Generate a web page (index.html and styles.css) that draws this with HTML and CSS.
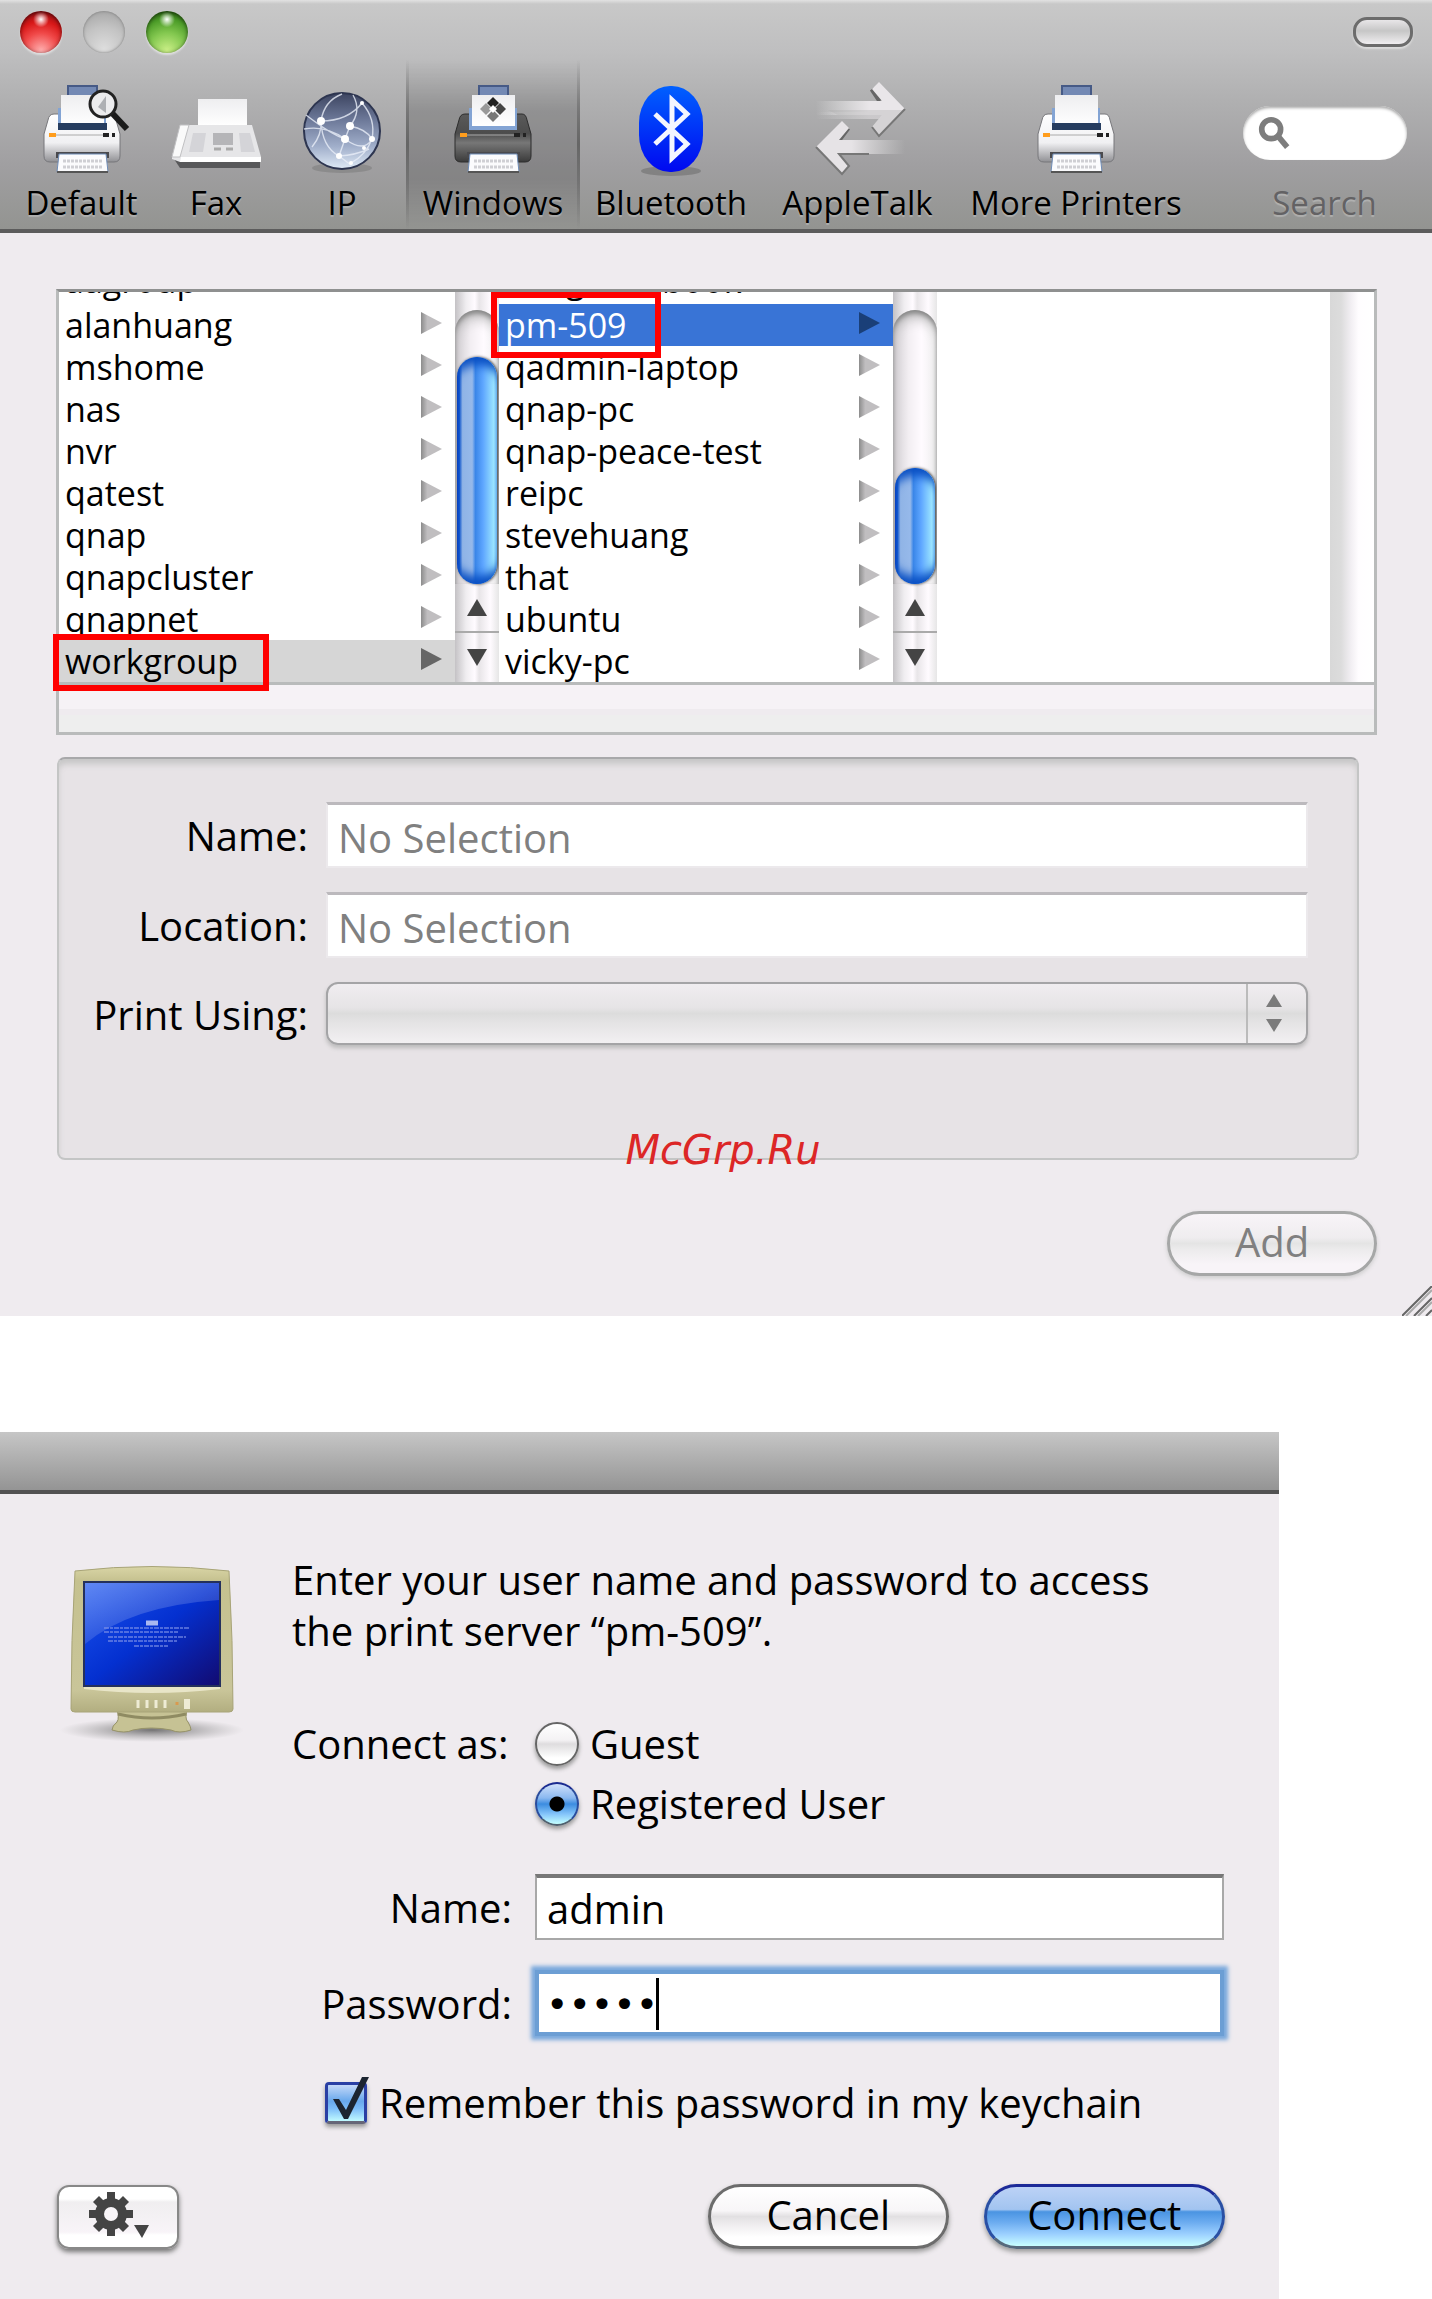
FILE: index.html
```html
<!DOCTYPE html>
<html lang="en">
<head>
  <meta charset="UTF-8">
  <meta name="viewport" content="width=device-width, initial-scale=1.0">
  <title>Add Printer</title>
  <link rel="stylesheet" href="styles.css">
</head>
<body>
  <!-- shared shapes -->
  <svg class="defs" width="0" height="0" aria-hidden="true">
    <defs>
      <linearGradient id="white-body" x1="0" y1="0" x2="0" y2="1">
        <stop offset="0" stop-color="#fff"/><stop offset=".6" stop-color="#f0f0f2"/><stop offset="1" stop-color="#909094"/>
      </linearGradient>
      <linearGradient id="dark-body" x1="0" y1="0" x2="0" y2="1">
        <stop offset="0" stop-color="#5a5a5a"/><stop offset=".4" stop-color="#4c4c4c"/><stop offset=".6" stop-color="#777"/><stop offset="1" stop-color="#3a3a3a"/>
      </linearGradient>
      <linearGradient id="paper" x1="0" y1="0" x2="0" y2="1">
        <stop offset="0" stop-color="#eeeef0"/><stop offset="1" stop-color="#fff"/>
      </linearGradient>
      <linearGradient id="globe" x1="0" y1="0" x2="0" y2="1">
        <stop offset="0" stop-color="#3c4460"/><stop offset=".35" stop-color="#6c7898"/><stop offset=".7" stop-color="#a0aeca"/><stop offset="1" stop-color="#dfeaf6"/>
      </linearGradient>
      <linearGradient id="bt" x1="0" y1="0" x2="0" y2="1">
        <stop offset="0" stop-color="#0060ff"/><stop offset="1" stop-color="#0008f0"/>
      </linearGradient>
      <linearGradient id="fade-right" gradientUnits="userSpaceOnUse" x1="8" y1="0" x2="97" y2="0"><stop offset="0" stop-color="#eee" stop-opacity="0"/><stop offset=".6" stop-color="#e9e6e9"/></linearGradient>
      <linearGradient id="fade-left" gradientUnits="userSpaceOnUse" x1="8" y1="0" x2="97" y2="0"><stop offset=".4" stop-color="#e6e3e6"/><stop offset="1" stop-color="#ddd" stop-opacity="0"/></linearGradient>
      <linearGradient id="case" x1="0" y1="0" x2="0" y2="1">
        <stop offset="0" stop-color="#d9d5a6"/><stop offset=".1" stop-color="#c5c18f"/><stop offset=".85" stop-color="#c9c599"/><stop offset="1" stop-color="#b2ae80"/>
      </linearGradient>
      <linearGradient id="screen" x1="0" y1="0" x2="1" y2="1">
        <stop offset="0" stop-color="#1b55f0"/><stop offset=".5" stop-color="#0430d0"/><stop offset="1" stop-color="#120a70"/>
      </linearGradient>
      <linearGradient id="gloss" x1="0" y1="0" x2=".6" y2="1">
        <stop offset="0" stop-color="#fff" stop-opacity=".3"/><stop offset="1" stop-color="#fff" stop-opacity=".06"/>
      </linearGradient>
      <radialGradient id="floor"><stop offset="0" stop-color="#555" stop-opacity=".8"/><stop offset="1" stop-color="#888" stop-opacity="0"/></radialGradient>
      <g id="paper-feed">
        <path d="M36 1h29v12H36z" fill="#7389b4" stroke="#465a86" stroke-width="2"/>
        <path d="M26 23h48v22H26z" fill="#83a4d4"/>
        <path d="M29 10h43v31H29z" fill="url(#paper)"/>
      </g>
      <g id="paper-out">
        <path d="M24 67h53v6H24z" fill="#4a4a4e"/>
        <path d="M27 69h47l2 18H25z" fill="#fbfbfd" stroke="#6f8db8" stroke-width="1"/>
        <path d="M25 87h51" stroke="#555" stroke-width="2"/>
        <path d="M31 76h40M31 82h40" stroke="#cfcfd4" stroke-width="3" stroke-dasharray="3 1"/>
      </g>
      <g id="lights">
        <path d="M24 50h50" stroke="#aaa" stroke-width="1"/>
        <path d="M17 48h7v4h-7z" fill="#ff9d1c"/>
        <path d="M71 48h6v4h-6zM80 48h3v4h-3z" fill="#222"/>
      </g>
      <g id="printer">
        <path d="M26 23h48v22H26z" fill="#83a4d4"/>
        <path d="M22 29h6v14h45V29h6q4 0 5 6l4 14v22q0 6-6 6H18q-6 0-6-6V49l4-14q1-6 6-6z" fill="url(#white-body)" stroke="#77777b" stroke-width="1"/>
        <use href="#paper-feed"/>
        <path d="M26 38h49v7H26z" fill="#263d60"/>
        <use href="#lights"/>
        <use href="#paper-out"/>
      </g>
    </defs>
  </svg>

  <section class="window browser-window">
    <header class="window-header">
      <div class="titlebar">
        <div class="lights">
          <button class="light red" aria-label="Close"></button>
          <button class="light gray" aria-label="Minimize"></button>
          <button class="light green" aria-label="Zoom"></button>
        </div>
        <button class="pill" aria-label="Toggle toolbar"></button>
      </div>
      <nav class="toolbar">
        <button class="tool">
          <svg class="icon" viewBox="0 0 100 90">
            <use href="#printer"/>
            <path d="M80 28l15 16" stroke="#1a1a1a" stroke-width="6"/>
            <circle cx="71" cy="19" r="13" fill="#ececee" stroke="#222" stroke-width="3"/>
            <path d="M66 22l8-11v17z" fill="#aeb0b4"/>
          </svg>
          <span>Default</span>
        </button>
        <button class="tool">
          <svg class="icon" viewBox="0 0 100 90">
            <path d="M8 74h86v9H14z" fill="#58585a"/>
            <path d="M32 14h49v27H32z" fill="url(#paper)"/>
            <path d="M19 40h67l9 32v5H14l-8-3v-4z" fill="#e6e6e8"/>
            <path d="M14 40h9L14 72H6z" fill="#fafafa" stroke="#c0c0c2" stroke-width="1"/>
            <path d="M15 72h80v5H14z" fill="#fff"/>
            <path d="M47 48h20v12H47z" fill="#b5b5b8"/>
            <path d="M27 48h13l-3 19H23zM73 48h11l5 19H75z" fill="#d4d4d8"/>
            <path d="M48 64h7M60 64h7" stroke="#aaa" stroke-width="3"/>
          </svg>
          <span>Fax</span>
        </button>
        <button class="tool">
          <svg class="icon" viewBox="0 0 100 90">
            <ellipse cx="50" cy="83" rx="30" ry="5" fill="#777" opacity=".5"/>
            <circle cx="50" cy="46" r="38" fill="url(#globe)" stroke="#2d3550" stroke-width="2"/>
            <g fill="none" stroke="#e8eef8" stroke-width="1.4" opacity=".8">
              <path d="M29 36Q32 16 50 9M29 36Q56 36 70 18M12 44Q34 40 53 54T80 54M29 36Q30 62 47 71M58 41Q70 26 61 10M58 41L53 54L47 71M58 41Q74 44 80 54Q74 70 59 78M14 30Q40 50 53 54M80 54Q84 34 70 18M47 71Q64 70 77 64M20 62Q30 50 29 36M47 71L59 80"/>
            </g>
            <g fill="#fff"><circle cx="29" cy="36" r="4"/><circle cx="58" cy="41" r="4"/><circle cx="53" cy="54" r="4"/><circle cx="80" cy="54" r="3"/><circle cx="47" cy="71" r="3"/><circle cx="70" cy="18" r="2"/><circle cx="72" cy="63" r="2"/><circle cx="59" cy="78" r="2"/></g>
          </svg>
          <span>IP</span>
        </button>
        <button class="tool selected">
          <svg class="icon" viewBox="0 0 100 90">
            <path d="M22 29h6v14h45V29h6q4 0 5 6l4 14v22q0 6-6 6H18q-6 0-6-6V49l4-14q1-6 6-6z" fill="url(#dark-body)" stroke="#2c2c2c" stroke-width="1"/>
            <use href="#paper-feed"/>
            <path d="M50 12l6 6-6 6-6-6z" fill="#222"/>
            <path d="M50 25l6 6-6 6-6-6z" fill="#777"/>
            <path d="M57 18l6 6-6 6-6-6z" fill="#444"/>
            <path d="M43 18l6 6-6 6-6-6z" fill="#999"/>
            <path d="M50 20l4 4-4 4-4-4z" fill="#fff"/>
            <use href="#lights"/>
            <use href="#paper-out"/>
          </svg>
          <span>Windows</span>
        </button>
        <button class="tool">
          <svg class="icon" viewBox="0 0 100 90">
            <ellipse cx="50" cy="86" rx="30" ry="5" fill="#666" opacity=".5"/>
            <rect x="18" y="1" width="64" height="86" rx="31" ry="37" fill="url(#bt)"/>
            <path d="M34 29l32 30-15 14V15l15 14-32 30" fill="none" stroke="#f4f6ff" stroke-width="5"/>
          </svg>
          <span>Bluetooth</span>
        </button>
        <button class="tool">
          <svg class="icon" viewBox="0 0 100 90">
            <path d="M8 27h66v7H8z" fill="url(#fade-right)" stroke="none" opacity=".5"/>
            <path d="M64 4l8 12" stroke="#666" stroke-width="5"/>
            <path d="M8 16h66L64 4l7-7 26 27-26 27-7-9 10-12H8z" fill="url(#fade-right)"/>
            <path d="M20 25h76L71 51l-7-9 10-12H30z" fill="#aaa" opacity=".3"/>
            <path d="M97 24L71 51l-7-9" fill="none" stroke="#777" stroke-width="2"/>
            <path d="M40 43l-9 12" stroke="#666" stroke-width="5"/>
            <path d="M97 55H31l10-12-7-7L8 62l26 27 7-8-10-12h66z" fill="url(#fade-left)"/>
            <path d="M8 62l26 27 7-8-10-12h30" fill="none" stroke="#777" stroke-width="2"/>
          </svg>
          <span>AppleTalk</span>
        </button>
        <button class="tool">
          <svg class="icon" viewBox="0 0 100 90"><use href="#printer"/></svg>
          <span>More Printers</span>
        </button>
        <div class="tool search">
          <div class="search-box">
            <svg viewBox="0 0 36 36"><circle cx="15" cy="14" r="10" fill="none" stroke="#7d7d7d" stroke-width="6"/><path d="M22 21l10 12" stroke="#7d7d7d" stroke-width="6"/></svg>
            <input type="search" id="search">
          </div>
          <label for="search">Search</label>
        </div>
      </nav>
    </header>

    <div class="window-body">
      <div class="browser">
        <div class="columns">
          <div class="column">
            <ul class="list">
              <li>aagroup</li>
              <li>alanhuang</li>
              <li>mshome</li>
              <li>nas</li>
              <li>nvr</li>
              <li>qatest</li>
              <li>qnap</li>
              <li>qnapcluster</li>
              <li>qnapnet</li>
              <li class="current">workgroup</li>
            </ul>
            <div class="scrollbar">
              <div class="groove"><div class="thumb long"></div></div>
              <button class="scroll-up" aria-label="Scroll up"></button>
              <button class="scroll-down" aria-label="Scroll down"></button>
            </div>
            <div class="mark mark-group"></div>
          </div>
          <div class="column">
            <ul class="list">
              <li>ming-macbook</li>
              <li class="active">pm-509</li>
              <li>qadmin-laptop</li>
              <li>qnap-pc</li>
              <li>qnap-peace-test</li>
              <li>reipc</li>
              <li>stevehuang</li>
              <li>that</li>
              <li>ubuntu</li>
              <li>vicky-pc</li>
            </ul>
            <div class="scrollbar">
              <div class="groove"><div class="thumb"></div></div>
              <button class="scroll-up" aria-label="Scroll up"></button>
              <button class="scroll-down" aria-label="Scroll down"></button>
            </div>
            <div class="mark mark-host"></div>
          </div>
          <div class="column">
            <ul class="list"></ul>
            <div class="scrollbar empty"></div>
          </div>
        </div>
        <div class="browser-foot"></div>
      </div>

      <form class="details">
        <label for="printer-name">Name:</label>
        <input type="text" id="printer-name" placeholder="No Selection">
        <label for="location">Location:</label>
        <input type="text" id="location" placeholder="No Selection">
        <label for="driver">Print Using:</label>
        <div class="select-box">
          <select id="driver"><option></option></select>
          <svg viewBox="0 0 16 38"><path d="M8 0l8 13H0zM8 38l8-13H0z" fill="#7b7b7b"/></svg>
        </div>
        <div class="watermark">McGrp.Ru</div>
      </form>

      <div class="actions">
        <button class="btn disabled">Add</button>
      </div>
      <svg class="grip" viewBox="0 0 30 30"><path d="M0 30L30 0M12 30L30 12M24 30l6-6" stroke="#666" stroke-width="2"/><path d="M4 30L30 4M16 30L30 16" stroke="#aaa" stroke-width="2"/></svg>
    </div>
  </section>

  <section class="window login-window">
    <header class="login-header"></header>
    <form class="login">
      <svg class="monitor" viewBox="0 0 184 180">
        <ellipse cx="92" cy="168" rx="92" ry="12" fill="url(#floor)"/>
        <path d="M56 145h72q-4 12 0 15 3 5 3 8-12 4-20 0-20-4-38 0-8 4-21 0 0-4 5-8 3-4-1-15z" fill="#c6c294" stroke="#969268" stroke-width="1"/>
        <path d="M58 152q34 8 68 0" fill="none" stroke="#8f8b62" stroke-width="3"/>
        <path d="M15 9Q92 0 169 9q4 70 4 138 0 3-4 3H15q-4 0-4-3Q11 79 15 9z" fill="url(#case)" stroke="#a8a478" stroke-width="1"/>
        <path d="M24 127q68 8 136 0v-2H24z" fill="#e8e5c8"/>
        <path d="M24 20h136v104H24z" fill="url(#screen)" stroke="#24305c" stroke-width="2"/>
        <path d="M25 21h134v17Q70 44 25 82z" fill="url(#gloss)"/>
        <path d="M86 61h12" stroke="#a9b8f0" stroke-width="5"/>
        <path d="M44 66h86M44 70h74M48 75h78M48 79h70M74 84h34" stroke="#8093e8" stroke-width="2" stroke-dasharray="5 1 3 1" opacity=".6"/>
        <path d="M78 138v8M87 138v8M96 138v8M105 138v8" stroke="#eeebd4" stroke-width="3"/>
        <path d="M127 137v10" stroke="#eeebd4" stroke-width="6"/>
        <path d="M117 140v3" stroke="#d89a50" stroke-width="3"/>
      </svg>
      <div class="login-main">
        <p>Enter your user name and password to access<br>the print server “pm-509”.</p>
        <div class="grid connect">
          <span id="as">Connect as:</span>
          <div role="radiogroup" aria-labelledby="as">
            <label class="radio"><input type="radio" name="as"> Guest</label>
            <label class="radio"><input type="radio" name="as" checked> Registered User</label>
          </div>
        </div>
        <div class="grid fields">
          <label for="user">Name:</label>
          <input type="text" id="user" value="admin">
          <label for="password">Password:</label>
          <div class="password-box">
            <input type="password" id="password" value="admin">
            <span class="caret"></span>
          </div>
        </div>
        <label class="remember">
          <span class="check-box">
            <input type="checkbox" checked>
            <svg viewBox="0 0 48 50"><path d="M8 24h6l7 11L37 2h7L23 44h-4z" fill="#1c2430"/></svg>
          </span>
          Remember this password in my keychain
        </label>
      </div>
    </form>
    <footer class="login-footer">
      <button class="gear-btn" aria-label="Options">
        <svg viewBox="0 0 60 48">
          <g fill="#444">
            <circle cx="22" cy="23" r="16"/>
            <path d="M18 1h8v44h-8z"/>
            <path d="M0 19h44v8H0z"/>
            <path d="M4 11l6-6 30 30-6 6z"/>
            <path d="M34 5l6 6-30 30-6-6z"/>
            <path d="M45 34h15l-7 13z"/>
          </g>
          <circle cx="22" cy="23" r="7" fill="#f8f5f8"/>
        </svg>
      </button>
      <button class="btn">Cancel</button>
      <button class="btn primary">Connect</button>
    </footer>
  </section>
</body>
</html>
```
FILE: styles.css
```css
* {
  box-sizing: border-box;
}
body {
  margin: 0;
  background: #fff;
  color: #000;
  font-family: "Open Sans", "Noto Sans", sans-serif;
  font-size: 40px;
  font-weight: 500;
}
button, input, select {
  font: inherit;
  color: inherit;
  margin: 0;
}
button {
  border: none;
  background: none;
  padding: 0;
}
.defs {
  position: absolute;
}
.window {
  background: #efebef;
}

/* title bar and toolbar */
.window-header {
  background: linear-gradient(#e2e2e2 0, #c8c8c8 4px, #bfbfc0 50px, #b0b0b1 100px, #a09fa1 165px, #939491 100%);
  border-bottom: 4px solid #5c5c5c;
}
.titlebar {
  display: flex;
  justify-content: space-between;
  align-items: center;
  height: 60px;
  padding: 4px 19px 0 20px;
}
.lights {
  display: flex;
  gap: 21px;
}
.light {
  width: 42px;
  height: 42px;
  border-radius: 50%;
  box-shadow: inset 0 1px 4px rgba(0, 0, 0, 0.6), 0 2px 2px rgba(255, 255, 255, 0.5);
}
.red {
  background: radial-gradient(circle at 50% 20%, #fff 0, rgba(255, 255, 255, 0) 20%), radial-gradient(circle at 50% 95%, #ffb0b0 0, #f04848 40%, #d81818 65%, #7c0a10 100%);
}
.gray {
  background: radial-gradient(circle at 50% 90%, #ddd 0, #c4c4c4 50%, #a0a0a0 100%);
  box-shadow: inset 0 0 3px #777;
}
.green {
  background: radial-gradient(circle at 50% 20%, #fff 0, rgba(255, 255, 255, 0) 20%), radial-gradient(circle at 50% 95%, #ccf088 0, #84c850 40%, #4c9c28 70%, #1c5008 100%);
}
.pill {
  width: 60px;
  height: 30px;
  border: 3px solid #6c6c6c;
  border-radius: 14px;
  background: linear-gradient(#e8e6e8, #c6c6c6 45%, #f0eef0);
  box-shadow: 0 2px 2px #ddd;
}
.toolbar {
  display: grid;
  grid-template-columns: 145fr 124fr 128fr 174fr 182fr 191fr 246fr 233fr;
  padding-left: 9px;
  font-size: 33px;
  line-height: 44px;
}
.tool {
  display: flex;
  flex-direction: column;
  align-items: center;
  padding: 25px 0 4px;
  white-space: nowrap;
  text-shadow: 0 2px 1px rgba(255, 255, 255, 0.25);
}
.icon {
  width: 100px;
  height: 90px;
  margin-bottom: 6px;
  overflow: visible;
}
.tool.selected {
  background: linear-gradient(rgba(0, 0, 0, 0), rgba(0, 0, 0, 0.16) 30%, rgba(0, 0, 0, 0.16) 70%, rgba(0, 0, 0, 0));
  border: solid;
  border-width: 0 3px;
  border-image: linear-gradient(rgba(60, 60, 60, 0), #666 50%, rgba(60, 60, 60, 0)) 1;
}
.search {
  padding-left: 18px;
  color: #636264;
}
.search-box {
  display: flex;
  align-items: center;
  width: 164px;
  height: 54px;
  margin: 21px 0;
  padding: 0 14px;
  border-radius: 27px;
  background: #fff;
  box-shadow: inset 0 2px 3px #aaa;
}
.search-box svg {
  flex: none;
  width: 34px;
  height: 36px;
}
.search-box input {
  width: 100%;
  min-width: 0;
  border: none;
  outline: none;
  background: none;
}

/* network browser */
.window-body {
  position: relative;
  padding: 56px 55px 40px 56px;
}
.browser {
  border: 3px solid #b9bbbb;
  border-top-color: #8f9090;
}
.columns {
  display: grid;
  grid-template-columns: 440fr 438fr 437fr;
  height: 390px;
}
.column {
  display: flex;
  position: relative;
  min-width: 0;
  background: #fff;
}
.list {
  flex: 1;
  display: flex;
  flex-direction: column;
  justify-content: flex-end;
  min-width: 0;
  height: 390px;
  margin: 0;
  padding: 0;
  overflow: hidden;
  list-style: none;
  font-size: 34px;
  line-height: 42px;
}
.list li {
  display: flex;
  flex: none;
  justify-content: space-between;
  align-items: center;
  height: 42px;
  padding: 0 13px 0 6px;
}
.list li::after {
  content: "";
  width: 21px;
  height: 22px;
  margin-bottom: 4px;
  background: linear-gradient(90deg, #8c8c8c, #c0bec0 30%);
  clip-path: polygon(0 0, 100% 50%, 0 100%);
}
/* the row scrolled under the top edge */
.list li:first-child {
  line-height: 36px;
  align-items: flex-start;
}
.list li:first-child::after {
  content: none;
}
.list .current {
  background: #d6d6d6;
}
.list .current::after {
  background: #666;
}
.list .active {
  background: #3974d6;
  color: #fff;
}
.list .active::after {
  background: #1a3f78;
}
.scrollbar {
  display: flex;
  flex-direction: column;
  width: 44px;
  padding-top: 18px;
  background: linear-gradient(90deg, #c4c2c5, #efedf0 25%, #fffbff 45%, #e8e5e8 55%, #fffbff 80%, #e6e6e6);
}
.scrollbar.empty {
  background: linear-gradient(90deg, #d8d8d8 0, #dcdcdc 25%, #f2eff3 48%, #fffdff 65%, #fff);
}
.groove {
  display: flex;
  flex-direction: column;
  justify-content: flex-end;
  flex: 1;
  padding: 0 2px;
  border-radius: 22px 22px 0 0;
  background: linear-gradient(90deg, #cfccd0, #f2eef2 35%, #fffbff 65%, #eee);
  box-shadow: inset 0 3px 4px #888, inset 0 12px 14px -6px #aaa;
}
.thumb {
  height: 116px;
  border-radius: 20px;
  background: linear-gradient(90deg, #0a3fc0 0, #0f55cc 6%, #90b4e6 14%, #96b9ea 38%, #3a86e8 46%, #5ea6ff 65%, #9ae4ff 92%, #6cb4ee);
  box-shadow: inset 0 16px 10px -8px #0a50c4, inset 0 -16px 10px -8px #0a50c4, 1px 0 3px #333;
}
.thumb.long {
  height: 227px;
}
.scroll-up, .scroll-down {
  display: flex;
  justify-content: center;
  align-items: center;
  height: 49px;
}
.scroll-up {
  border-bottom: 2px solid #aaa;
}
.scroll-up::after, .scroll-down::after {
  content: "";
  width: 20px;
  height: 17px;
  background: #444;
  clip-path: polygon(50% 0, 100% 100%, 0 100%);
}
.scroll-down::after {
  clip-path: polygon(0 0, 100% 0, 50% 100%);
}
.browser-foot {
  height: 50px;
  border-top: 3px solid #b9bbbb;
  background: linear-gradient(#f6f2f6 52%, #efebef 52%, #efebef 64%, #eee 64%);
}
/* red frames over the chosen rows */
.mark {
  position: absolute;
  border: 6px solid #f00;
  pointer-events: none;
}
.mark-group {
  left: -6px;
  bottom: -9px;
  width: 216px;
  height: 57px;
}
.mark-host {
  z-index: 1;
  left: -8px;
  top: 0;
  width: 170px;
  height: 66px;
}

/* printer details */
.details {
  position: relative;
  display: grid;
  grid-template-columns: 249px 1fr;
  gap: 24px 18px;
  align-items: center;
  margin: 22px 18px 0 1px;
  padding: 43px 49px 113px 0;
  border: 2px solid #c4c5c5;
  border-top-color: #a8a8aa;
  border-radius: 8px;
  background: #e7e3e6;
  box-shadow: inset 0 6px 6px -1px #c6c6c6;
}
.details label, .grid > label {
  text-align: right;
}
.details > label {
  padding-top: 2px;
  line-height: 48px;
}
.details input {
  width: 100%;
  height: 66px;
  padding: 3px 10px 0;
  border: 2px solid #ece9ec;
  border-top: 3px solid #bcb9bd;
  background: #fff;
}
::placeholder {
  color: #808080;
  opacity: 1;
}
.select-box {
  position: relative;
}
.select-box select {
  display: block;
  width: 100%;
  height: 63px;
  appearance: none;
  border: 2px solid #a4a4a6;
  border-radius: 12px;
  background: linear-gradient(90deg, transparent calc(100% - 60px), #bbb calc(100% - 60px), #bbb calc(100% - 58px), transparent calc(100% - 58px)), linear-gradient(#f0edf0, #e6e4e6 40%, #dcdcdc 50%, #e4e3e4 65%, #f2f0f2);
  box-shadow: 0 3px 4px #bbb;
}
.select-box svg {
  position: absolute;
  top: 12px;
  right: 26px;
  width: 16px;
  height: 38px;
  pointer-events: none;
}
.watermark {
  position: absolute;
  bottom: -16px;
  left: 30px;
  right: 0;
  text-align: center;
  color: #dc2626;
  font: italic 40px/48px "DejaVu Sans", sans-serif;
}
.actions {
  display: flex;
  justify-content: flex-end;
  margin-top: 51px;
}
.btn {
  min-width: 241px;
  height: 65px;
  padding-bottom: 4px;
  border: 3px solid #6c6c6c;
  border-radius: 33px;
  background: linear-gradient(#fff, #f8f6f8 40%, #e2e0e2 50%, #f0eef0 65%, #fff 85%);
  box-shadow: 0 3px 5px #999;
}
.btn.disabled {
  min-width: 210px;
  border-color: #a6a7a7;
  background: linear-gradient(#f8f4f8, #efedef 40%, #e4e4e4 50%, #ecebec 60%, #f8f4f8 85%);
  box-shadow: 0 2px 4px #ccc;
  color: #808080;
}
.btn.primary {
  border-color: #1c2a98 #2a50a4 #56697c;
  background: linear-gradient(#bcd2f6, #a2c4f0 38%, #4a94e2 42%, #6cacf0 60%, #9cd0ff 80%, #c8ffff);
}
.grip {
  position: absolute;
  right: 0;
  bottom: 0;
  width: 30px;
  height: 30px;
}

/* login sheet */
.login-window {
  width: 89.3%;
  margin-top: 116px;
}
.login-header {
  height: 62px;
  border-bottom: 4px solid #525252;
  background: linear-gradient(#c6c6c6, #b2b2b2 40%, #949494);
}
.login {
  display: flex;
  gap: 48px;
  padding: 60px 55px 56px 60px;
}
.monitor {
  flex: none;
  width: 184px;
  height: 180px;
  margin-top: 8px;
}
.login-main {
  flex: 1;
}
.login-main p {
  margin: 0 0 58px;
  line-height: 51px;
  white-space: nowrap;
}
.grid {
  display: grid;
  grid-template-columns: 220px 1fr;
  column-gap: 23px;
}
.connect {
  line-height: 60px;
  white-space: nowrap;
}
.radio {
  display: flex;
  align-items: center;
  gap: 11px;
}
.radio input {
  appearance: none;
  width: 44px;
  height: 44px;
  border: 2px solid #666;
  border-radius: 50%;
  background: linear-gradient(#fff, #f4f2f4 40%, #dedcde 50%, #fff 85%);
  box-shadow: 0 3px 4px #999;
}
.radio input:checked {
  border-color: #1a2a90 #2a4c9c #50606e;
  background: radial-gradient(circle, #000 0, #000 7px, transparent 8px), linear-gradient(#d0e0fa, #8ab8f0 35%, #3c8ce0 50%, #84c4fa 75%, #c4ffff);
}
.fields {
  row-gap: 30px;
  margin-top: 40px;
  align-items: center;
}
.fields input {
  display: block;
  width: 100%;
  height: 66px;
  padding: 0 10px;
  border: 2px solid #a8a8a8;
  border-top: 4px solid #777;
  background: #fff;
}
.password-box {
  position: relative;
}
.password-box input {
  padding: 4px 7px 0;
  border: 4px solid #6c9ed4;
  outline: none;
  box-shadow: 0 0 4px 4px #79a8dc;
  font-family: "DejaVu Sans", sans-serif;
  font-size: 38px;
}
.caret {
  position: absolute;
  top: 8px;
  left: 121px;
  width: 3px;
  height: 52px;
  background: #000;
}
.remember {
  display: flex;
  align-items: center;
  gap: 12px;
  margin: 42px 0 0 33px;
  line-height: 50px;
  white-space: nowrap;
}
.check-box {
  position: relative;
  flex: none;
  width: 42px;
  height: 42px;
}
.check-box input {
  display: block;
  appearance: none;
  width: 42px;
  height: 42px;
  border: 3px solid #2a3fa4;
  border-bottom-color: #667;
  border-radius: 4px;
  background: linear-gradient(#c4d8f8, #68a8ec 45%, #7cbcf8 65%, #c0faff);
  box-shadow: 0 3px 4px #999;
}
.check-box svg {
  position: absolute;
  left: 0;
  top: -7px;
  width: 48px;
  height: 50px;
}
.login-footer {
  display: flex;
  align-items: center;
  gap: 35px;
  padding: 0 54px 50px 57px;
}
.gear-btn {
  width: 122px;
  height: 64px;
  margin-right: auto;
  border: 2px solid #888;
  border-radius: 12px;
  background: linear-gradient(#fff 20%, #f0eef0 25%, #f8f4f8 75%, #fff 80%);
  box-shadow: 0 3px 5px #777;
}
.gear-btn svg {
  display: block;
  width: 60px;
  height: 48px;
  margin: 0 0 4px 30px;
}
```
